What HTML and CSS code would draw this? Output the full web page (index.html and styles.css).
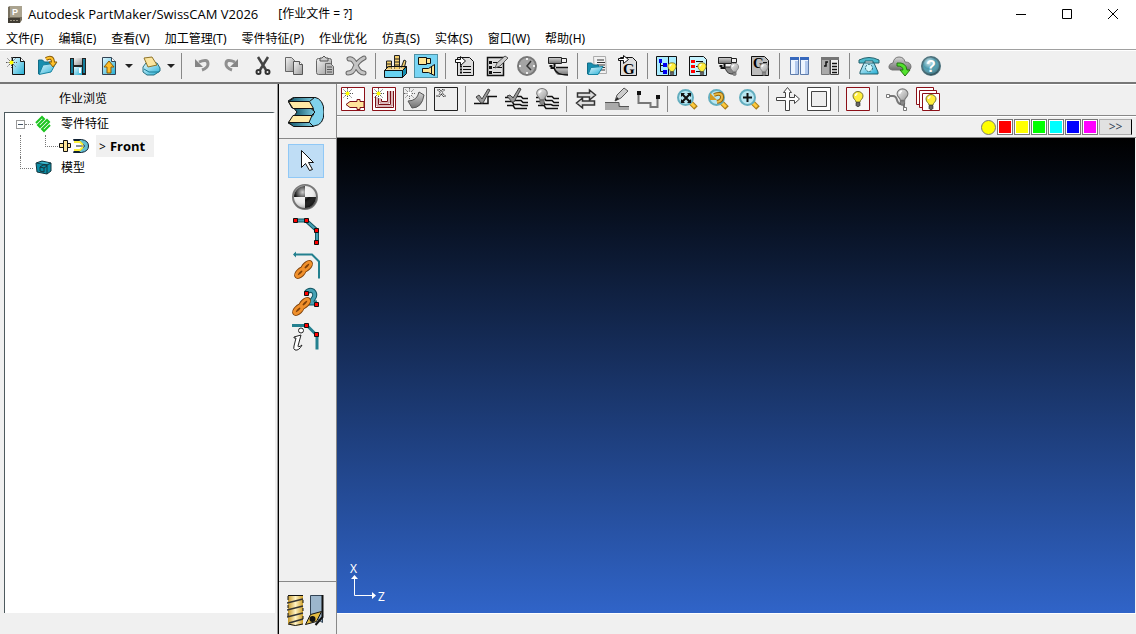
FILE: index.html
```html
<!DOCTYPE html>
<html lang="zh-CN">

<head>
  <meta charset="utf-8">
  <title>Autodesk PartMaker/SwissCAM V2026</title>
  <link rel="stylesheet" href="styles.css">
</head>

<body>
  <!-- shared gradients and icon parts -->
  <svg class="defs" width="0" height="0" aria-hidden="true">
    <defs>
      <linearGradient id="blue" x1="0" y1="0" x2="1" y2="1">
        <stop offset="0" stop-color="#e4f8ff" />
        <stop offset="1" stop-color="#22aed4" />
      </linearGradient>
      <linearGradient id="grey" x1="0" y1="0" x2="1" y2="1">
        <stop offset="0" stop-color="#f4f4f4" />
        <stop offset="1" stop-color="#999" />
      </linearGradient>
      <linearGradient id="metal" x1="0" y1="0" x2="0" y2="1">
        <stop offset="0" stop-color="#d5d5d5" />
        <stop offset="1" stop-color="#707070" />
      </linearGradient>
      <linearGradient id="gold" x1="0" y1="0" x2="1" y2="0">
        <stop offset="0" stop-color="#c79a2c" />
        <stop offset=".5" stop-color="#fff3c4" />
        <stop offset="1" stop-color="#d0a028" />
      </linearGradient>
      <linearGradient id="teal" x1="0" y1="0" x2="1" y2="0">
        <stop offset="0" stop-color="#115568" />
        <stop offset="1" stop-color="#7fcfe4" />
      </linearGradient>
      <radialGradient id="ball" cx=".4" cy=".3" r=".7">
        <stop offset="0" stop-color="#fff" stop-opacity=".8" />
        <stop offset=".5" stop-color="#fff" stop-opacity="0" />
        <stop offset="1" stop-color="#000" stop-opacity=".35" />
      </radialGradient>
      <symbol id="spark" viewBox="0 0 11 11">
        <path d="M5.500 0v11M0 5.500h11M1.500 1.500l8 8M9.500 1.500l-8 8" stroke="#555" stroke-dasharray="1.500 1" />
        <circle cx="5.500" cy="5.500" r="2" fill="#ff0" />
      </symbol>
      <symbol id="spark-grey" viewBox="0 0 11 11">
        <path d="M5.500 0v11M0 5.500h11M1.500 1.500l8 8M9.500 1.500l-8 8" stroke="#666" stroke-dasharray="1.500 1" />
        <circle cx="5.500" cy="5.500" r="2" fill="#fff" />
      </symbol>
      <symbol id="bulb" viewBox="0 0 12 16">
        <path d="M4 11C4 9 1 8 1 5a5 4.500 0 0 1 10 0c0 3-3 4-3 6z" fill="#ffee3c" stroke="#77722f" />
        <path d="M3.500 5q0-2 2-2.500" stroke="#fff" stroke-width="1.500" fill="none" />
        <path d="M4 11.500h4v3l-1 1H5l-1-1z" fill="#666" stroke="#222" stroke-width=".6" />
      </symbol>
      <symbol id="bulb-grey" viewBox="0 0 12 16">
        <path d="M4 11C4 9 1 8 1 5a5 4.500 0 0 1 10 0c0 3-3 4-3 6z" fill="url(#grey)" stroke="#777" />
        <path d="M3.500 5q0-2 2-2.500" stroke="#fff" stroke-width="1.500" fill="none" />
        <path d="M4 11.500h4v3l-1 1H5l-1-1z" fill="#888" stroke="#555" stroke-width=".6" />
      </symbol>
      <symbol id="camera" viewBox="0 0 24 24">
        <path d="M2.500 3.500h13v6h-13z" fill="url(#metal)" stroke="#222" />
        <path d="M15.500 4.500h5v4h-5z" fill="#eee" stroke="#222" />
        <path d="M8.500 10v4h-3v-2h-2" fill="none" stroke="#111" stroke-width="2" />
      </symbol>
      <symbol id="lens" viewBox="0 0 24 24">
        <path d="M15 15l6 6" stroke="#a97c16" stroke-width="5" />
        <path d="M15 15l5 5" stroke="#ffc93a" stroke-width="3" />
        <circle cx="10.500" cy="10.500" r="7.500" fill="#b9e7f2" stroke="#64aebf" stroke-width="2" />
      </symbol>
      <symbol id="contours" viewBox="0 0 24 24">
        <path d="M1 10.500h8l2 3h6l2 2h5M1 14.500h7l2 3h6l2 1h6M3 18.500h6l2 3h12M12 9.500h5l2 2h5" fill="none" stroke="#111" stroke-width="1.500" />
      </symbol>
      <symbol id="chain" viewBox="0 0 24 24">
        <g fill="none" stroke="#7d3f08" stroke-width="5">
          <ellipse cx="8" cy="16" rx="5.500" ry="2.500" transform="rotate(-45 8 16)" />
          <ellipse cx="15" cy="9" rx="5.500" ry="2.500" transform="rotate(-45 15 9)" />
        </g>
        <g fill="none" stroke="#f0902c" stroke-width="3">
          <ellipse cx="8" cy="16" rx="5.500" ry="2.500" transform="rotate(-45 8 16)" />
          <ellipse cx="15" cy="9" rx="5.500" ry="2.500" transform="rotate(-45 15 9)" />
        </g>
      </symbol>
      <symbol id="front" viewBox="0 0 36 30">
        <path d="M0 4l6-4h20q10 2 10 15T26 29H6l-6-3 5-6h18q3-1 3-5t-3-4H4z" fill="#80d2ec" stroke="#111" />
        <path d="M.5 4.500l6-4h20l-5 4z" fill="url(#teal)" stroke="#111" />
        <path d="M.5 4.500h21l4 7H5z" fill="#ffeaa6" stroke="#111" />
        <path d="M6 11.500h17l4 3.500-4 4H6l3-4z" fill="url(#teal)" stroke="#111" />
        <path d="M5 18.500h19l-3 7H.5z" fill="#ffeaa6" stroke="#111" />
        <path d="M.5 25.500h21l4 4h-20z" fill="url(#teal)" stroke="#111" />
      </symbol>
    </defs>
  </svg>

  <header class="titlebar">
    <svg class="app-icon" width="16" height="17" viewBox="0 0 16 17">
      <path d="M1 1l2-1h12v14l-2 3H1z" fill="#77705f" />
      <path d="M3 0h12v11H3z" fill="#aaa38f" />
      <path d="M1 12h12v5H1z" fill="#403c33" />
      <path d="M3 14.500h8" stroke="#999281" stroke-dasharray="2 1" />
      <text class="app-letter" x="5" y="9">P</text>
    </svg>
    <h1 class="app-title">Autodesk PartMaker/SwissCAM V2026</h1>
    <span class="app-file">[作业文件 = ?]</span>
    <div class="window-buttons">
      <button class="window-button" aria-label="最小化"><svg width="12" height="12"><path d="M1 6.500h10" /></svg></button>
      <button class="window-button" aria-label="最大化"><svg width="12" height="12"><path d="M1.500 1.500h9v9h-9z" /></svg></button>
      <button class="window-button" aria-label="关闭"><svg width="12" height="12"><path d="M1 1l10 10M11 1L1 11" /></svg></button>
    </div>
  </header>

  <nav class="menubar">
    <a href="#">文件(F)</a>
    <a href="#">编辑(E)</a>
    <a href="#">查看(V)</a>
    <a href="#">加工管理(T)</a>
    <a href="#">零件特征(P)</a>
    <a href="#">作业优化</a>
    <a href="#">仿真(S)</a>
    <a href="#">实体(S)</a>
    <a href="#">窗口(W)</a>
    <a href="#">帮助(H)</a>
  </nav>

  <div class="toolbar main-toolbar">
    <button class="tool" aria-label="新建"><svg viewBox="0 0 24 24">
      <path d="M8.500 3.500h8l4 4v13h-12z" fill="url(#blue)" stroke="#111" />
      <path d="M16.500 3.500v4h4" fill="#fff" stroke="#111" />
      <use href="#spark" x="2" y="3" width="11" height="11" />
    </svg></button>
    <button class="tool" aria-label="打开"><svg viewBox="0 0 24 24">
      <path d="M3.500 20V6h4l2 2h7v4" fill="#178fb0" stroke="#126c86" />
      <path d="M4 20.500L8 11l13-2-5 9z" fill="url(#blue)" stroke="#1683a0" />
      <path d="M11 5q7-4 7 4" fill="none" stroke="#8a5c07" stroke-width="4" />
      <path d="M14 8h8l-4 5z" fill="#ffc22a" stroke="#8a5c07" />
      <path d="M11 5q7-4 7 4" fill="none" stroke="#ffc22a" stroke-width="2" />
    </svg></button>
    <button class="tool" aria-label="保存"><svg viewBox="0 0 24 24">
      <path d="M4 4h16v17H4z" fill="#222" />
      <path d="M5 5h2v14H5zM17 5h2v14h-2z" fill="#147f9d" />
      <path d="M8 4h8v7H8z" fill="url(#grey)" />
      <path d="M8 13h8v8H8z" fill="url(#blue)" />
      <path d="M13 14h2v5h-2z" fill="#fff" />
    </svg></button>
    <button class="tool" aria-label="导出"><svg viewBox="0 0 24 24">
      <path d="M5.500 3.500h9l4 4v13h-13z" fill="url(#blue)" stroke="#345" />
      <path d="M14.500 3.500v4h4" fill="#fff" stroke="#345" />
      <path d="M12 7l5 6h-3v6h-4v-6H7z" fill="#ffbd26" stroke="#8a5c07" />
    </svg></button>
    <span class="caret"></span>
    <button class="tool" aria-label="打印"><svg viewBox="0 0 24 24">
      <path d="M4 13l3-4h11l3 5v3l-6 4H8l-4-3z" fill="url(#blue)" stroke="#276f80" />
      <path d="M5 4l8-1 5 8-9 2z" fill="#fbe5a0" stroke="#8f7326" />
      <path d="M5 15l5 3h10" fill="none" stroke="#187d96" />
    </svg></button>
    <span class="caret"></span>
    <span class="separator"></span>
    <button class="tool" aria-label="撤销"><svg viewBox="0 0 24 24">
      <path d="M10 8q9-4 9 2 0 4-6 6" fill="none" stroke="#909090" stroke-width="3" />
      <path d="M6 5v8h8z" fill="#858585" />
    </svg></button>
    <button class="tool" aria-label="重做"><svg viewBox="0 0 24 24">
      <path d="M15 8q-9-4-9 2 0 4 6 6" fill="none" stroke="#909090" stroke-width="3" />
      <path d="M18 5v8h-8z" fill="#858585" />
    </svg></button>
    <button class="tool" aria-label="剪切"><svg viewBox="0 0 24 24">
      <path d="M7 3l8 13M17 3L9 16" stroke="#444" stroke-width="2.500" />
      <circle cx="7.500" cy="18" r="2" fill="none" stroke="#333" stroke-width="2" />
      <circle cx="16.500" cy="18" r="2" fill="none" stroke="#333" stroke-width="2" />
    </svg></button>
    <button class="tool" aria-label="复制"><svg viewBox="0 0 24 24">
      <path d="M3.500 3.500h6l3 3v11h-9z" fill="url(#grey)" stroke="#666" />
      <path d="M11.500 7.500h6l3 3v10h-9z" fill="url(#grey)" stroke="#555" />
      <path d="M17.500 7.500v3h3" fill="#fff" stroke="#555" />
    </svg></button>
    <button class="tool" aria-label="粘贴"><svg viewBox="0 0 24 24">
      <rect x="3.500" y="4.500" width="15" height="16" rx="2" fill="url(#grey)" stroke="#666" />
      <path d="M7 7V4h2l2-2 2 2h2v3z" fill="#ccc" stroke="#555" />
      <path d="M12.500 9.500h5l3 3v8h-8z" fill="#bbb" stroke="#666" />
      <path d="M14 13h5M14 15.500h5M14 18h5" stroke="#555" />
    </svg></button>
    <button class="tool" aria-label="删除"><svg viewBox="0 0 24 24">
      <path d="M5 5q4-1 7 6 3 8 8 8M20 4q-6 3-9 9-2 6-7 6" fill="none" stroke="#666" stroke-width="5" stroke-linecap="round" />
      <path d="M5 5q4-1 7 6 3 8 8 8M20 4q-6 3-9 9-2 6-7 6" fill="none" stroke="#c4c4c4" stroke-width="3" stroke-linecap="round" />
    </svg></button>
    <span class="separator"></span>
    <button class="tool" aria-label="刀具库"><svg viewBox="0 0 24 24">
      <path d="M3.500 15V7h5v8M11.500 15V1.500h5V15M18 14l3-8 2 1-2 8" fill="#f3cd6b" stroke="#222" />
      <path d="M3 10h6M3 13h6M11 5h6M11 8h6M11 11h6" stroke="#222" />
      <path d="M1.500 16.500l4-4h18l-4 4z" fill="#f3cd6b" fill-opacity=".5" stroke="#111" />
      <path d="M1.500 16.500h18v7h-18z" fill="#67d2f0" stroke="#111" />
      <path d="M19.500 16.500l4-4v7l-4 4z" fill="#168fb1" stroke="#111" />
    </svg></button>
    <button class="tool pressed" aria-label="刀具视图"><svg viewBox="0 0 24 24">
      <path d="M4.500 3.500h8v7h-8zM12.500 4.500h4v5h-4z" fill="#ffe594" stroke="#111" />
      <path d="M8.500 14.500h6l6-4v11l-6-3h-6z" fill="#ffe594" stroke="#111" />
      <path d="M17.500 13v7" stroke="#111" />
    </svg></button>
    <span class="separator"></span>
    <button class="tool" aria-label="工序表"><svg viewBox="0 0 24 24">
      <path d="M4.500 3.500h12l4 4v14h-16z" fill="#ddd" stroke="#111" />
      <path d="M10 12.500h8M10 15.500h8M10 18.500h8" stroke="#111" />
      <path d="M7 12.500h2M7 15.500h2M7 18.500h2" stroke="#111" stroke-width="2" />
      <path d="M2.500 5.500h5v-3l5 4.500-5 4.500v-3h-5z" fill="#fff" stroke="#111" />
    </svg></button>
    <button class="tool" aria-label="编辑工序表"><svg viewBox="0 0 24 24">
      <path d="M3.500 3.500h16v18h-16z" fill="#ddd" stroke="#111" stroke-width="1.500" />
      <path d="M9 8.500h6M9 13.500h9M9 18.500h8" stroke="#111" />
      <path d="M5 8.500h3M5 13.500h3M5 18.500h3" stroke="#111" stroke-width="3" />
      <path d="M11 14l2-5 8-7 3 2-8 8z" fill="#ccc" stroke="#555" />
    </svg></button>
    <button class="tool" aria-label="加工时间"><svg viewBox="0 0 24 24">
      <circle cx="12" cy="12" r="9" fill="#a4a4a4" stroke="#777" stroke-width="2" />
      <path d="M12 4v2M12 18v2M4 12h2M18 12h2" stroke="#eee" stroke-width="2" />
      <path d="M16 7l-4 5 4 4" fill="none" stroke="#333" stroke-width="1.500" />
    </svg></button>
    <button class="tool" aria-label="仿真"><svg viewBox="0 0 24 24">
      <use href="#camera" width="24" height="24" />
      <path d="M8 13h14v8H12q-4-2-4-8z" fill="url(#metal)" />
      <path d="M8 13q1 8 14 8M10 13.500h12" fill="none" stroke="#111" stroke-width="1.500" />
    </svg></button>
    <span class="separator"></span>
    <button class="tool" aria-label="打开报告"><svg viewBox="0 0 24 24">
      <path d="M8.500 2.500h12l1 17h-12z" fill="#f2f2f2" stroke="#aaa" />
      <path d="M12 6h7M12 8.500h8M12 11h8M14 13.500h6M14 16h6" stroke="#333" />
      <path d="M2.500 20V9h4l2 2h5v3" fill="#178fb0" stroke="#126c86" />
      <path d="M3 20.500l3-7 12-1-5 8z" fill="url(#blue)" stroke="#1683a0" />
    </svg></button>
    <button class="tool" aria-label="生成G代码"><svg viewBox="0 0 24 24">
      <path d="M4.500 3.500h12l4 4v14h-16z" fill="#ddd" stroke="#111" />
      <text class="g-code" x="7" y="20">G</text>
      <path d="M2.500 4.500h5v-3l5 4-5 4v-3h-5z" fill="#fff" stroke="#111" />
    </svg></button>
    <span class="separator"></span>
    <button class="tool" aria-label="显示结构"><svg viewBox="0 0 24 24">
      <path d="M1.500 2.500h20v19h-20z" fill="#a9ecff" stroke="#111" />
      <path d="M13.500 3v18" stroke="#111" />
      <path d="M5.500 8v9.500h5M5.500 11.500h5" fill="none" stroke="#111" />
      <path d="M4 5h3v4H4zM8 9h4v4H8zM8 16h4v4H8z" fill="#00e" />
      <use href="#bulb" x="12" y="8" width="10" height="14" />
    </svg></button>
    <button class="tool" aria-label="显示列表"><svg viewBox="0 0 24 24">
      <path d="M3.500 2.500h14l3 3v16h-17z" fill="#c5f3ff" stroke="#111" />
      <path d="M10 7.500h7M10 12.500h7M10 17.500h5" stroke="#111" />
      <path d="M5 6h4v3H5zM5 11h4v3H5zM5 16h4v3H5z" fill="red" />
      <use href="#bulb" x="11" y="8" width="10" height="14" />
    </svg></button>
    <button class="tool" aria-label="显示仿真"><svg viewBox="0 0 24 24">
      <use href="#camera" x="-1" width="24" height="24" />
      <path d="M8 13h8l2 7h-4q-5-1-6-7z" fill="#888" stroke="#333" />
      <use href="#bulb-grey" x="12" y="9" width="11" height="13" />
    </svg></button>
    <button class="tool" aria-label="显示G代码"><svg viewBox="0 0 24 24">
      <path d="M3.500 2.500h13l4 4v15h-17z" fill="#bbb" stroke="#111" />
      <text class="g-code small" x="5" y="14">G</text>
      <path d="M15 8.500h4" stroke="#111" />
      <use href="#bulb-grey" x="11" y="9" width="10" height="13" />
    </svg></button>
    <span class="separator"></span>
    <button class="tool" aria-label="分栏"><svg viewBox="0 0 24 24">
      <path d="M3.500 3.500h8v17h-8zM13.500 3.500h8v17h-8z" fill="#edf5ff" stroke="#5d7baa" />
      <path d="M3 3h9v3H3zM13 3h9v3h-9z" fill="#3668bd" />
      <path d="M8 7h3v13H8zM18 7h3v13h-3z" fill="#b3caee" />
    </svg></button>
    <button class="tool" aria-label="程序对照"><svg viewBox="0 0 24 24">
      <path d="M3.500 3.500h8v17h-8z" fill="#aaa" stroke="#777" />
      <path d="M12.500 3.500h8v17h-8z" fill="#eee" stroke="#444" />
      <path d="M3 3h9v3H3zM12 3h9v3h-9z" fill="#777" />
      <path d="M6 12h2V8h2M14 9.500h5M14 12.500h5M14 15.500h5M14 18.500h5" fill="none" stroke="#111" stroke-width="1.500" />
    </svg></button>
    <span class="separator"></span>
    <button class="tool" aria-label="电话支持"><svg viewBox="0 0 24 24">
      <path d="M2 9V6q10-5 20 0v3h-6V7H8v2z" fill="#4bb9cb" stroke="#23616d" />
      <path d="M7 9h10l4 9v2H3v-2z" fill="url(#blue)" stroke="#23616d" />
      <circle cx="12" cy="14" r="3.500" fill="#d4f6fa" stroke="#23616d" stroke-dasharray="2 1" />
    </svg></button>
    <button class="tool" aria-label="在线更新"><svg viewBox="0 0 24 24">
      <path d="M4 16q-4-1-3-4 1-3 4-3 1-6 6-6 5 0 6 5 6 0 6 5 0 3-3 3z" fill="url(#metal)" stroke="#777" />
      <path d="M9 9q9-1 10 7h3l-5 6-5-6h3q0-4-6-4z" fill="#52e32d" stroke="#247512" />
    </svg></button>
    <button class="tool" aria-label="帮助"><svg viewBox="0 0 24 24">
      <circle cx="12" cy="12" r="9" fill="#4c9bae" stroke="#49707b" stroke-width="2" />
      <circle cx="12" cy="12" r="9" fill="url(#ball)" />
      <text class="help-mark" x="7" y="18">?</text>
    </svg></button>
  </div>

  <main class="workspace">
    <aside class="browser">
      <h2 class="browser-title">作业浏览</h2>
      <ul class="tree">
        <li class="tree-row">
          <span class="expander"></span>
          <span class="dash"></span>
          <svg class="tree-icon" width="18" height="18">
            <path d="M1 8l6-6 2 2-6 6 2 2 7-7 2 2-7 7 2 2 6-6" fill="none" stroke="#1cc41f" stroke-width="2" />
          </svg>
          <span class="tree-label">零件特征</span>
        </li>
        <li class="tree-row">
          <span class="guide"></span>
          <span class="elbow"></span>
          <svg class="front-icon" width="32" height="18">
            <path d="M4.500 3.500h4v3h3v4h-3v4h-4v-4h-4v-4h4z" fill="#ffe69b" stroke="#111" />
            <path d="M4.500 6v5M8.500 6v5" stroke="#111" />
            <path d="M14.500 2.500h8q7 1 7 6.500t-7 6.500h-8l3-3h5l3-3.500-3-3.500h-5z" fill="#64bed0" stroke="#123" />
            <path d="M14.500 3.500h6l4 4M14.500 14.500h6l4-4M17 9h7" fill="none" stroke="#123" />
            <path d="M15 5h6l3 3M15 13h6l3-3" fill="none" stroke="#fff23a" stroke-width="2" />
          </svg>
          <span class="tree-label selected">&gt; <b>Front</b></span>
        </li>
        <li class="tree-row">
          <span class="elbow root"></span>
          <svg class="tree-icon" width="18" height="18">
            <path d="M1 4l6-2 9 2v8l-4 3-10-2z" fill="#0a8da6" stroke="#15343c" />
            <path d="M2 4l10 2v9M12 6l4-2M5 8l4 1v4l-4-1zM9 9l3-2M5 8l3-2h4" fill="none" stroke="#15343c" />
            <path d="M3 4l5-1 6 1-2 1z" fill="#45bdd2" />
          </svg>
          <span class="tree-label">模型</span>
        </li>
      </ul>
    </aside>

    <div class="tool-column">
      <div class="column-head">
        <svg width="36" height="30"><use href="#front" width="36" height="30" /></svg>
      </div>
      <div class="column-tools">
        <button class="column-tool active" aria-label="选择"><svg width="36" height="34">
          <path d="M13.500 6.500v17l4-4 4 7 3-1-4-7h5z" fill="#fff" stroke="#111" />
        </svg></button>
        <button class="column-tool" aria-label="原点"><svg width="36" height="34" viewBox="0 -1 36 34">
          <circle cx="17" cy="17" r="12" fill="#eee" stroke="#777" stroke-width="2" />
          <path d="M17 17V6A11 11 0 0 0 6 17zM17 17v11a11 11 0 0 0 11-11z" fill="#111" />
          <circle cx="17" cy="17" r="12" fill="url(#ball)" />
        </svg></button>
        <button class="column-tool" aria-label="折线"><svg width="36" height="34" viewBox="0 -1 36 34">
          <path d="M7 5.500h11l11 10v12" fill="none" stroke="#135663" stroke-width="4" />
          <path d="M7 5.500h11l11 10v12" fill="none" stroke="#46a1b4" stroke-width="2" />
          <path d="M5.500 3.500h4v4h-4zM16.500 3.500h4v4h-4zM26.500 13.500h4v4h-4zM26.500 25.500h4v4h-4z" fill="red" stroke="#111" />
        </svg></button>
        <button class="column-tool" aria-label="链接轮廓"><svg width="36" height="34">
          <path d="M6 5.500h18l7 7v17" fill="none" stroke="#23808f" stroke-width="2" />
          <path d="M5 5.500l3-3v6z" fill="#23808f" />
          <use href="#chain" x="5" y="9" width="22" height="22" />
        </svg></button>
        <button class="column-tool" aria-label="链接点"><svg width="36" height="34" viewBox="0 -2 36 34">
          <path d="M18 7q3-4 7-2 5 5-4 12h8" fill="none" stroke="#135663" stroke-width="5" />
          <path d="M18 7q3-4 7-2 5 5-4 12h8" fill="none" stroke="#46a1b4" stroke-width="3" />
          <use href="#chain" x="3" y="9" width="22" height="22" />
          <path d="M16.500 5.500h4v4h-4zM26.500 16.500h4v4h-4z" fill="red" stroke="#111" />
        </svg></button>
        <button class="column-tool" aria-label="信息"><svg width="36" height="34" viewBox="0 -2 36 34">
          <path d="M4 4.500h15l10 10v14" fill="none" stroke="#23808f" stroke-width="3" />
          <path d="M16.500 2.500h4v4h-4zM26.500 11.500h4v4h-4z" fill="red" stroke="#111" />
          <circle cx="13" cy="9.500" r="2.500" fill="#fff" stroke="#222" />
          <path d="M6 16l7-2-3 11q0 2 4-1-3 6-7 5-2-1-1-4l2-8H6z" fill="#fff" stroke="#222" />
        </svg></button>
      </div>
      <div class="column-foot">
        <svg width="38" height="34">
          <path d="M1 2h15v29q-7 4-15 0z" fill="url(#gold)" />
          <path d="M0 10l16-4M0 17l16-4M0 24l16-4M2 30l14-4" stroke="#333" stroke-width="1.500" />
          <path d="M1 2.500h15M1 3v4M1 12v3M1 20v3M16 7v3M16 15v3M16 23v3M1 31q7 3 15 0" fill="none" stroke="#111" />
          <path d="M23.500 2.500h12v27l-12-8z" fill="#9cb6cc" stroke="#345" />
          <path d="M35.500 2v22l-7 8" fill="none" stroke="#111" stroke-width="2" />
          <path d="M18.500 31.500l5-10 11-3-5 10z" fill="#e2bb42" stroke="#111" />
          <circle cx="25.500" cy="26" r="3" fill="#111" />
        </svg>
      </div>
    </div>

    <section class="viewer">
      <div class="toolbar feature-toolbar">
        <button class="tool" aria-label="新建孔"><svg viewBox="0 0 24 24">
          <path d="M.500.500h23v23H.500z" fill="#fff" stroke="#8c1018" />
          <path d="M5 17.500l4-3h7v-2h3v2h4v6h-4v2h-3v-2H9z" fill="#ffe69b" stroke="#7a1017" />
          <use href="#spark" x="1" y="1" width="11" height="11" />
        </svg></button>
        <button class="tool" aria-label="新建轮廓"><svg viewBox="0 0 24 24">
          <path d="M.500.500h23v23H.500z" fill="#fff" stroke="#8c1018" />
          <path d="M3.500 9v11.500h18V4M6.500 11v6.500h12V4M9.500 12v2.500h6V4" fill="none" stroke="#7a1017" />
          <path d="M5 10v9h15V4M8 11v5h9V4" fill="none" stroke="#b8777b" />
          <use href="#spark" x="1" y="1" width="11" height="11" />
        </svg></button>
        <button class="tool" aria-label="新建曲面"><svg viewBox="0 0 24 24">
          <path d="M.500.500h23v23H.500z" fill="#eee" stroke="#777" />
          <path d="M5 14q9 0 11-9l5 3q-2 13-12 13z" fill="url(#metal)" stroke="#555" />
          <use href="#spark-grey" x="1" y="1" width="11" height="11" />
        </svg></button>
        <button class="tool" aria-label="删除特征"><svg viewBox="0 0 24 24">
          <path d="M.500.500h23v23H.500z" fill="#eee" stroke="#222" />
          <path d="M3 3h2l5 6h2M11 3H9L5 9H2" fill="none" stroke="#333" stroke-width="2" />
          <path d="M3 3h2l5 6h2M11 3H9L5 9H2" fill="none" stroke="#fff" />
        </svg></button>
        <span class="separator"></span>
        <button class="tool" aria-label="检查"><svg viewBox="0 0 24 24">
          <path d="M1 16.500h14v-7h9" fill="none" stroke="#111" stroke-width="1.500" />
          <path d="M3 10l3-2 3 4 6-10 2 1-7 13H8z" fill="#999" stroke="#444" />
        </svg></button>
        <button class="tool" aria-label="全部检查"><svg viewBox="0 0 24 24">
          <use href="#contours" width="24" height="24" />
          <path d="M3 9l3-1 3 3 6-10 2 1-7 13H8z" fill="#999" stroke="#444" />
        </svg></button>
        <button class="tool" aria-label="显示轮廓"><svg viewBox="0 0 24 24">
          <use href="#contours" width="24" height="24" />
          <use href="#bulb-grey" x="0" y="1" width="14" height="17" />
        </svg></button>
        <span class="separator"></span>
        <button class="tool" aria-label="反向"><svg viewBox="0 0 24 24">
          <path d="M3.500 6h12V3l6 5-6 5v-3h-12zM20.500 14h-12v-3l-6 5 6 5v-3h12z" fill="#ddd" stroke="#333" stroke-width="1.500" />
        </svg></button>
        <button class="tool" aria-label="编辑轮廓"><svg viewBox="0 0 24 24">
          <path d="M0 16h14l2 4h8v3H0z" fill="#aaa" />
          <path d="M0 15.500h14v4h10" fill="none" stroke="#555" />
          <path d="M10 14l2-6 7-7 4 3-7 7z" fill="#ccc" stroke="#555" />
          <path d="M10 14l2-4 2 2z" fill="#222" />
        </svg></button>
        <button class="tool" aria-label="端点"><svg viewBox="0 0 24 24">
          <path d="M2.500 7v9h12v4h7V9" fill="none" stroke="#777" stroke-width="2" />
          <path d="M1 4h4v4H1zM20 8h4v4h-4z" fill="#111" />
        </svg></button>
        <span class="separator"></span>
        <button class="tool" aria-label="满屏"><svg viewBox="0 0 24 24">
          <use href="#lens" width="24" height="24" />
          <path d="M7 7l8 8M15 7l-8 8" stroke="#111" stroke-width="2" />
          <path d="M6 6h4l-4 4zM16 6h-4l4 4zM6 16v-4l4 4zM16 16v-4l-4 4z" fill="#111" />
        </svg></button>
        <button class="tool" aria-label="上一视图"><svg viewBox="0 0 24 24">
          <use href="#lens" width="24" height="24" />
          <path d="M8 8q8-3 8 2 0 4-5 5" fill="none" stroke="#92620a" stroke-width="4" />
          <path d="M4 6v7h7z" fill="#d49a20" />
          <path d="M8 8q8-3 8 2 0 4-5 5" fill="none" stroke="#eaba42" stroke-width="2" />
        </svg></button>
        <button class="tool" aria-label="放大"><svg viewBox="0 0 24 24">
          <use href="#lens" width="24" height="24" />
          <path d="M10.500 6v9M6 10.500h9" stroke="#111" stroke-width="2" />
        </svg></button>
        <span class="separator"></span>
        <button class="tool" aria-label="平移"><svg viewBox="0 0 24 24">
          <path d="M11.500.500l-4 5h2v5h-9v3h9v10h4v-10h5v3l5-4.500-5-4.500v3h-5v-5h2z" fill="#fff" stroke="#444" />
        </svg></button>
        <button class="tool" aria-label="窗口"><svg viewBox="0 0 24 24">
          <path d="M.500.500h23v23H.500z" fill="#fff" stroke="#444" />
          <path d="M4.500 4.500h15v15h-15z" fill="#eee" stroke="#444" />
        </svg></button>
        <span class="separator"></span>
        <button class="tool" aria-label="显示"><svg viewBox="0 0 24 24">
          <path d="M.500.500h23v23H.500z" fill="#f7f7f7" stroke="#8c1018" />
          <use href="#bulb" x="6" y="4" width="12" height="16" />
        </svg></button>
        <span class="separator"></span>
        <button class="tool" aria-label="显示路径"><svg viewBox="0 0 24 24">
          <path d="M3 9h5q3 0 4 4 1 5 7 4v5" fill="none" stroke="#777" stroke-width="2" />
          <path d="M1.500 7.500h3v3h-3zM18.500 20.500h3v3h-3z" fill="#fff" stroke="#777" />
          <use href="#bulb-grey" x="11" y="1" width="13" height="18" />
        </svg></button>
        <button class="tool" aria-label="显示全部"><svg viewBox="0 0 24 24">
          <path d="M.500.500h17v17H.500z" fill="#fff" stroke="#8c1018" />
          <path d="M3.500 3.500h17v17h-17z" fill="#fff" stroke="#8c1018" />
          <path d="M6.500 6.500h17v17h-17z" fill="#fff" stroke="#8c1018" />
          <use href="#bulb" x="9" y="7" width="12" height="16" />
        </svg></button>
      </div>

      <div class="colorbar">
        <button class="current-color" aria-label="当前颜色"></button>
        <button class="swatch red" aria-label="红"></button>
        <button class="swatch yellow" aria-label="黄"></button>
        <button class="swatch green" aria-label="绿"></button>
        <button class="swatch cyan" aria-label="青"></button>
        <button class="swatch blue" aria-label="蓝"></button>
        <button class="swatch magenta" aria-label="品红"></button>
        <button class="more-colors">&gt;&gt;</button>
      </div>

      <div class="canvas">
        <svg class="axes" width="44" height="56">
          <path d="M7.500 28v17.500H26" fill="none" stroke="#fff" />
          <path d="M4 29l3.500-4 3.500 4zM25 42l4 3.500-4 3.500z" fill="#fff" />
          <text x="3" y="23">X</text>
          <text x="31" y="51">Z</text>
        </svg>
      </div>
      <footer class="status"></footer>
    </section>
  </main>
</body>

</html>
```
FILE: styles.css
```css
* {
  box-sizing: border-box;
}

body {
  margin: 0;
  height: 100vh;
  display: flex;
  flex-direction: column;
  overflow: hidden;
  background: #f0f0f0;
  color: #000;
  font: 12px/16px "Noto Sans", "Noto Sans CJK SC", sans-serif;
  user-select: none;
}

button {
  padding: 0;
  border: 0;
  background: none;
  color: inherit;
  font: inherit;
}

svg {
  display: block;
}

.defs {
  position: absolute;
}

/* title and menu */

.titlebar {
  display: flex;
  align-items: center;
  height: 28px;
  padding-left: 7px;
  background: #fff;
}

.app-icon {
  margin-right: 5px;
}

.app-letter {
  fill: #fff;
  font: bold 9px "Liberation Sans", sans-serif;
}

.app-title {
  margin: 0 20px 0 0;
  font: 13px/16px "Open Sans", sans-serif;
}

.window-buttons {
  display: flex;
  margin-left: auto;
}

.window-button {
  display: grid;
  place-items: center;
  width: 46px;
  height: 28px;
}

.window-button path {
  fill: none;
  stroke: #000;
}

.menubar {
  display: flex;
  align-items: center;
  gap: 15px;
  height: 22px;
  padding-left: 6px;
  border-bottom: 1px solid #a0a0a0;
  background: #fff;
}

.menubar a {
  color: inherit;
  text-decoration: none;
}

/* toolbars */

.toolbar {
  display: flex;
  align-items: center;
  gap: 1px;
  padding: 0 0 2px 1px;
  border-top: 1px solid #fff;
}

.main-toolbar {
  height: 34px;
  border-bottom: 2px solid #777;
}

.feature-toolbar {
  height: 32px;
  border-bottom: 1px solid #888;
}

.tool {
  display: grid;
  place-items: center;
  flex: none;
  width: 30px;
  height: 28px;
}

.tool svg {
  width: 24px;
  height: 24px;
}

.pressed svg {
  background: #78d5f4;
  outline: 1px solid #4f91a4;
  outline-offset: -1px;
}

.separator {
  width: 1px;
  height: 26px;
  margin: 0 3px;
  background: #888;
}

.caret {
  width: 8px;
  margin-right: 2px;
  border: 4px solid transparent;
  border-top-color: #222;
  border-bottom: 0;
}

.g-code {
  font: bold 15px "Liberation Serif", serif;
}

.g-code.small {
  font-size: 14px;
}

.help-mark {
  fill: #fff;
  font: bold 16px "Liberation Sans", sans-serif;
}

/* job browser */

.workspace {
  display: flex;
  flex: 1;
  min-height: 0;
}

.browser {
  display: flex;
  flex-direction: column;
  flex: none;
  width: 278px;
  padding: 0 2px 21px 4px;
  border-right: 1px solid #999;
}

.browser-title {
  margin: 0;
  padding: 7px 55px 5px;
  font-size: 12px;
  font-weight: normal;
}

.tree {
  flex: 1;
  margin: 0;
  padding: 0;
  border: solid #fff;
  border-width: 1px 2px 0 1px;
  border-top-color: #4d5a5e;
  border-left-color: #4d5a5e;
  background: #fff;
  list-style: none;
}

.tree-row {
  display: flex;
  align-items: center;
  height: 22px;
}

.expander {
  width: 9px;
  height: 9px;
  margin-left: 11px;
  border: 1px solid #999;
  background: linear-gradient(#456, #456) center / 5px 1px no-repeat #fff;
}

.dash {
  width: 8px;
  border-top: 1px dotted #777;
}

.tree-icon {
  margin: 0 8px 0 2px;
}

.front-icon {
  margin: 0 5px 0 1px;
}

.guide {
  width: 25px;
  height: 22px;
  margin-left: 15px;
  border-left: 1px dotted #777;
}

.elbow {
  align-self: flex-start;
  width: 13px;
  height: 12px;
  border: dotted #777;
  border-width: 0 0 1px 1px;
}

.root {
  margin-left: 15px;
}

.selected {
  height: 22px;
  padding: 3px 9px 3px 3px;
  background: #f0f0f0;
}

.selected b {
  padding-left: 1px;
  font: bold 13px/16px "Open Sans", sans-serif;
}

/* vertical tools */

.tool-column {
  display: flex;
  flex-direction: column;
  flex: none;
  width: 59px;
  border-left: 1px solid #000;
  border-right: 1px solid #888;
}

.column-head {
  height: 55px;
  padding: 13px 9px;
  border-bottom: 1px solid #888;
}

.column-tools {
  display: flex;
  flex: 1;
  flex-direction: column;
  gap: 1px;
  padding: 5px 9px;
}

.column-tool {
  width: 36px;
  height: 34px;
}

.active {
  background: #bfddf5;
  outline: 1px solid #90c8f6;
  outline-offset: -1px;
}

.column-foot {
  height: 53px;
  padding: 11px 8px;
  border-top: 1px solid #888;
}

/* part view */

.viewer {
  display: flex;
  flex: 1;
  flex-direction: column;
  min-width: 0;
}

.colorbar {
  display: flex;
  align-items: center;
  justify-content: flex-end;
  gap: 1px;
  height: 22px;
  padding-right: 4px;
  border-top: 1px solid #fff;
  border-bottom: 1px solid #888;
}

.current-color {
  width: 15px;
  height: 15px;
  border: 1px solid #777;
  border-radius: 50%;
  background: #ff0;
}

.swatch {
  width: 16px;
  height: 16px;
  border: 1px solid #777;
  box-shadow: inset 0 0 0 1px #fff;
}

.red {
  background: #f00;
}

.yellow {
  background: #ff0;
}

.green {
  background: #0f0;
}

.cyan {
  background: #0ff;
}

.blue {
  background: #00f;
}

.magenta {
  background: #f0f;
}

.more-colors {
  width: 33px;
  height: 16px;
  border: 1px solid #adadad;
  border-right: 1px solid #000;
  background: #e1e1e1;
  color: #345;
  line-height: 12px;
}

.canvas {
  display: flex;
  flex: 1;
  align-items: flex-end;
  margin-right: 1px;
  padding: 0 10px 8px;
  background: linear-gradient(#000, #3064c8);
}

.axes {
  margin-bottom: -1px;
}

.axes text {
  fill: #fff;
  font: 12px "Noto Sans", sans-serif;
}

.status {
  height: 21px;
  border-top: 1px solid #fff;
}
```
